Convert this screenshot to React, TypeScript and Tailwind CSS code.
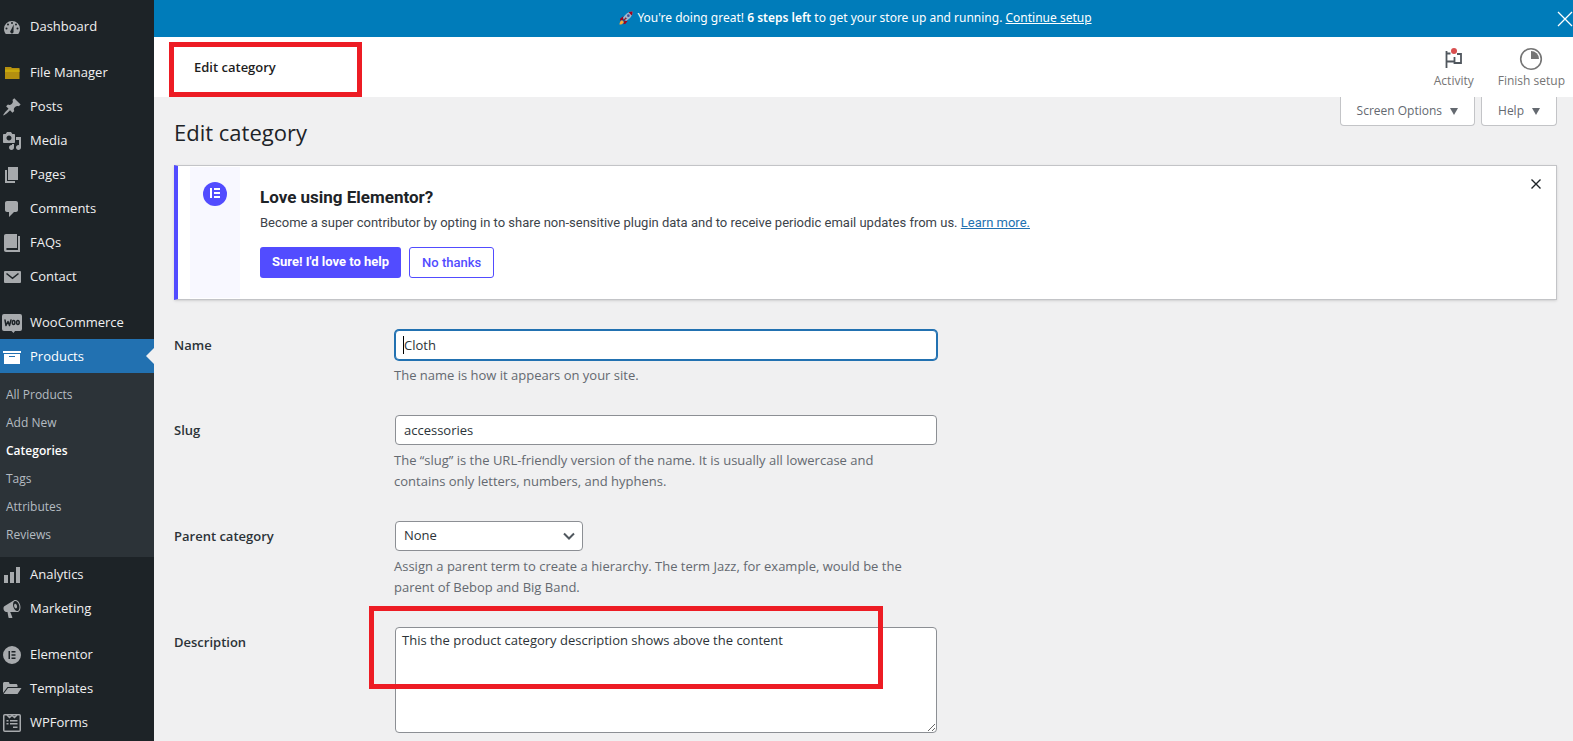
import type { ReactNode } from "react";
import clsx from "clsx";

function Dashicon({ children }: { children: ReactNode }) {
  return (
    <svg viewBox="0 0 20 20" className="h-5 w-5 shrink-0" fill="currentColor" fillRule="evenodd" aria-hidden="true">
      {children}
    </svg>
  );
}

const icons = {
  dashboard: (
    <path d="M3.8 17h12.4c1.1-1.4 1.8-3.1 1.8-5a8 8 0 1 0-16 0c0 1.900.700 3.600 1.800 5zM10 5a1 1 0 1 1 0 2 1 1 0 0 1 0-2zM6 6.600a1 1 0 1 1 0 2 1 1 0 0 1 0-2zM14 6.600a1 1 0 1 1 0 2 1 1 0 0 1 0-2zM4.500 10.500a1 1 0 1 1 0 2 1 1 0 0 1 0-2zM15.500 10.500a1 1 0 1 1 0 2 1 1 0 0 1 0-2zM11.700 7.500l-.2 6.500a1.700 1.700 0 1 1-2.600-.7z" />
  ),
  folder: (
    <>
      <path fill="#b48f10" d="M3 4h6l1 1h7.500v11H3z" />
      <path fill="#c9a80d" d="M3 6.500h14.500V9H3z" />
    </>
  ),
  pin: (
    <path d="M10.440 3.020l1.820-1.820 6.360 6.350-1.830 1.820c-1.050-.68-2.480-.57-3.410.36l-.75.75c-.92.93-1.040 2.350-.35 3.410l-1.830 1.820-2.410-2.410-2.800 2.790c-.42.42-3.380 2.710-3.800 2.290s1.860-3.390 2.280-3.810l2.790-2.790L4.100 9.360l1.830-1.820c1.050.69 2.480.57 3.400-.36l.75-.75c.93-.92 1.050-2.350.36-3.410z" />
  ),
  media: (
    <path d="M13 11V4c0-.55-.45-1-1-1h-1.670L9 1H5L3.670 3H2c-.55 0-1 .45-1 1v7c0 .55.45 1 1 1h10c.55 0 1-.45 1-1zM7 4.500c1.380 0 2.500 1.120 2.500 2.500S8.380 9.500 7 9.500 4.500 8.380 4.500 7 5.620 4.500 7 4.500zM14 6h5v10.500c0 1.380-1.120 2.500-2.500 2.500S14 17.880 14 16.500s1.120-2.500 2.500-2.500c.17 0 .34.02.5.05V9h-3V6zm-4 8.050V13h2v3.500c0 1.380-1.120 2.500-2.500 2.500S7 17.880 7 16.500 8.120 14 9.500 14c.17 0 .34.02.5.05z" />
  ),
  pages: <path d="M6 15V2h10v13H6zm-1 1h8v2H3V5h2v11z" />,
  comments: (
    <path d="M5 2h9c1.100 0 2 .9 2 2v7c0 1.100-.9 2-2 2h-2l-5 5v-5H5c-1.100 0-2-.9-2-2V4c0-1.100.9-2 2-2z" />
  ),
  book: <path d="M4 1h11v14H5c-1 0-1 2 0 2h11V3h2v16H4c-1.300 0-2-.9-2-2V3c0-1.200.8-2 2-2z" />,
  mail: (
    <>
      <rect x="2" y="4" width="17" height="12" rx="1" />
      <path d="M4.500 6.500l6 4.800 6-4.800" fill="none" stroke="#1d2327" strokeWidth="1.600" />
    </>
  ),
  woo: (
    <>
      <path d="M2 1h16a2 2 0 0 1 2 2v13a2 2 0 0 1-2 2h-5l-1.500 2-2-2H2a2 2 0 0 1-2-2V3a2 2 0 0 1 2-2z" />
      <g fill="none" stroke="#1d2327" strokeWidth="1.500" strokeLinecap="round" strokeLinejoin="round">
        <path d="M3 7l1 5.500L6 8.500l1.500 4L9 7" />
        <ellipse cx="11.600" cy="9.600" rx="1.300" ry="2" />
        <ellipse cx="15.900" cy="9.600" rx="1.300" ry="2" />
      </g>
    </>
  ),
  archive: <path d="M19 4v2H1V4h18zM2 7h16v10H2V7zm11 3V9H7v1h6z" />,
  chart: <path d="M18 18V2h-4v16h4zm-6 0V7H8v11h4zm-6 0v-8H2v8h4z" />,
  megaphone: (
    <path d="M18.150 5.940c.46 1.620.38 3.220-.02 4.480-.42 1.280-1.260 2.180-2.300 2.480-.16.06-.26.06-.4.06-.06.02-.12.02-.18.02-.06.02-.14.02-.22.02h-6.800l2.220 5.500c.02.14-.06.26-.14.34-.08.1-.24.16-.34.16H6.950c-.1 0-.26-.06-.34-.16-.08-.08-.16-.2-.14-.34l-1-5.500H4.250l-.02-.02c-.5.06-1.080-.18-1.540-.62s-.88-1.080-1.060-1.880c-.24-.8-.2-1.560-.02-2.200.18-.62.58-1.080 1.060-1.300l.02-.02 9-5.400c.1-.06.18-.1.24-.16.06-.04.14-.08.24-.12.16-.08.28-.12.5-.18 1.040-.3 2.240.1 3.220.98s1.840 2.240 2.260 3.860zm-2.580 5.980h-.02c.4-.1.74-.34 1.040-.7.58-.7.86-1.760.86-3.040 0-.64-.1-1.300-.28-1.980-.34-1.360-1.020-2.500-1.780-3.240s-1.680-1.100-2.460-.88c-.82.22-1.400.96-1.700 2-.32 1.040-.28 2.360.06 3.720.38 1.360 1 2.500 1.800 3.240.78.74 1.620 1.100 2.480.88zm-2.540-7.080c.22-.04.42-.02.62.04.38.16.76.48 1.020 1s.42 1.200.42 1.780c0 .3-.04.56-.12.8-.18.48-.44.84-.86.94-.34.1-.8-.06-1.140-.4s-.64-.86-.78-1.500c-.18-.62-.12-1.240.02-1.720s.48-.84.82-.94z" />
  ),
  elementor: (
    <path d="M10 1a9 9 0 1 0 0 18 9 9 0 0 0 0-18zM6.500 6v8H8V6zM9.500 6v1.500h4V6zM9.500 9.250v1.500h4v-1.500zM9.500 12.500V14h4v-1.500z" />
  ),
  templates: (
    <path d="M1 4.500c0-.8.7-1.500 1.500-1.500H6c.8 0 1.500.7 1.500 1.500V5H14c.8 0 1.500.7 1.500 1.500V8H5.500L1 14zM6 9h13.500l-4 6H1.500z" />
  ),
  wpforms: (
    <>
      <g fill="none" stroke="currentColor" strokeWidth="1.500">
        <rect x="1.750" y="1.750" width="16.500" height="16.500" rx="1" />
        <path d="M5 2l2.500 2.500L10 2.500l2.500 2L15 2" />
      </g>
      <path d="M4.500 7h2v1.500h-2zM8 7h7.500v1.500H8zM4.500 10h2v1.500h-2zM8 10h7.500v1.500H8zM11 13.500h4.500V15H11z" />
    </>
  ),
};

type MenuItem = { label: string; icon: keyof typeof icons; current?: boolean; submenu?: string[] };

// each group is divided from the next by a separator
const menuGroups: MenuItem[][] = [
  [{ label: "Dashboard", icon: "dashboard" }],
  [
    { label: "File Manager", icon: "folder" },
    { label: "Posts", icon: "pin" },
    { label: "Media", icon: "media" },
    { label: "Pages", icon: "pages" },
    { label: "Comments", icon: "comments" },
    { label: "FAQs", icon: "book" },
    { label: "Contact", icon: "mail" },
  ],
  [
    { label: "WooCommerce", icon: "woo" },
    {
      label: "Products",
      icon: "archive",
      current: true,
      submenu: ["All Products", "Add New", "Categories", "Tags", "Attributes", "Reviews"],
    },
    { label: "Analytics", icon: "chart" },
    { label: "Marketing", icon: "megaphone" },
  ],
  [
    { label: "Elementor", icon: "elementor" },
    { label: "Templates", icon: "templates" },
    { label: "WPForms", icon: "wpforms" },
  ],
];

function Sidebar() {
  return (
    <nav className="flex w-[154px] shrink-0 flex-col gap-3 bg-[#1d2327] pt-[9px]">
      {menuGroups.map((group, i) => (
        <ul key={i}>
          {group.map((item) => (
            <li key={item.label}>
              <a
                href="#"
                className={clsx(
                  "relative flex h-[34px] items-center gap-2 pt-0.5 pl-0.5 text-[13px]",
                  item.current ? "bg-[#2271b1] text-white" : "text-[#f0f0f1]",
                )}
              >
                <span className={item.current ? "text-white" : "text-[#a7aaad]"}>
                  <Dashicon>{icons[item.icon]}</Dashicon>
                </span>
                {item.label}
                {item.current && (
                  <span className="absolute top-1/2 right-0 -translate-y-1/2 border-8 border-l-0 border-transparent border-r-[#f0f0f1]" />
                )}
              </a>
              {item.submenu && (
                <ul className="bg-[#2c3338] py-2">
                  {item.submenu.map((sub) => (
                    <li key={sub}>
                      <a
                        href="#"
                        className={clsx(
                          "flex h-7 items-center pl-1.5 text-xs",
                          sub === "Categories" ? "font-semibold text-white" : "text-[#b5bcc2]",
                        )}
                      >
                        {sub}
                      </a>
                    </li>
                  ))}
                </ul>
              )}
            </li>
          ))}
        </ul>
      ))}
    </nav>
  );
}

function Rocket() {
  return (
    <svg viewBox="0 0 16 16" className="h-3.5 w-3.5" aria-hidden="true">
      <path d="M5 6L1.500 8.500 1 11l4-1zM10 11l-2.500 3.500L5 15l1-4z" fill="#a0041e" />
      <path d="M15.500.500C11 .3 7.500 3 4.500 8l3.500 3.500C13 8.500 15.700 5 15.500.500z" fill="#9fb6cc" />
      <path d="M15.500.500c-1.700 0-3 .2-4.500 1l3.500 3.500c.8-1.500 1-2.900 1-4.500z" fill="#a0041e" />
      <circle cx="10.700" cy="5.300" r="1.500" fill="#3b4f9b" />
      <path d="M7.500 7L3.500 12.500 9 8.500z" fill="#8b1a2b" />
      <path d="M3.500 10.500C1.500 11 .7 13 .5 15.500 3 15.300 5 14.500 5.500 12.500z" fill="#ffac33" />
    </svg>
  );
}

function SetupBar() {
  return (
    <div className="flex h-[37px] items-center bg-[#007cba] font-['Noto_Sans',sans-serif] text-xs text-white">
      <div className="flex flex-1 items-center justify-center gap-1 pb-0.5">
        <Rocket />
        <p>
          You're doing great! <strong className="font-semibold">6 steps left</strong> to get your store up and running.{" "}
          <a href="#" className="underline">
            Continue setup
          </a>
        </p>
      </div>
      <button type="button" aria-label="Dismiss">
        <svg viewBox="0 0 16 16" className="h-4 w-4" stroke="currentColor" strokeWidth="1.300">
          <path d="M1 1l14 14M15 1L1 15" />
        </svg>
      </button>
    </div>
  );
}

function Header() {
  return (
    <header className="flex h-[60px] items-center justify-between bg-white pr-2">
      <div className="relative flex items-center self-stretch pt-0.5 pl-10">
        <h2 className="text-[13px] font-semibold text-[#1e1e1e]">Edit category</h2>
        <div className="pointer-events-none absolute top-[5px] left-[15px] h-[55px] w-[193px] border-5 border-[#ed1c24]" />
      </div>
      <div className="flex gap-6 pt-0.5 text-xs text-[#757575]">
        <button type="button" className="flex flex-col items-center gap-0.5">
          <svg viewBox="0 0 24 24" className="h-6 w-6" fill="none" aria-hidden="true">
            <path d="M4.500 4v17M4.500 14.500h8V16h6.500V7h-4M4.500 6.500h4M12.500 10v4.500" stroke="#50575e" strokeWidth="1.800" />
            <circle cx="12" cy="4" r="3" fill="#d94f4f" />
          </svg>
          Activity
        </button>
        <button type="button" className="flex flex-col items-center gap-0.5">
          <svg viewBox="0 0 24 24" className="h-6 w-6" aria-hidden="true">
            <circle cx="12" cy="12" r="10.300" fill="none" stroke="#757575" strokeWidth="1.600" />
            <path d="M12 4a8 8 0 0 1 8 8h-8z" fill="#757575" />
          </svg>
          Finish setup
        </button>
      </div>
    </header>
  );
}

function ScreenMeta() {
  return (
    <div className="flex gap-1.5">
      {["Screen Options", "Help"].map((label) => (
        <button
          key={label}
          type="button"
          className="flex h-[29px] items-center gap-2 rounded-b border border-t-0 border-[#c3c4c7] bg-white px-4 text-xs text-[#646970]"
        >
          {label}
          <span className="border-x-4 border-t-7 border-transparent border-t-[#646970]" />
        </button>
      ))}
    </div>
  );
}

function ElementorMark() {
  return (
    <svg viewBox="0 0 12 12" className="h-3 w-3" fill="currentColor" aria-hidden="true">
      <path d="M1 1h2v10H1zM5 1h6v2H5zM5 5h6v2H5zM5 9h6v2H5z" />
    </svg>
  );
}

function ElementorNotice() {
  return (
    <section className="flex border border-l-4 border-[#c3c4c7] border-l-[#524cff] bg-white font-[Roboto,sans-serif] shadow-sm">
      <div className="my-px ml-3 flex w-[50px] justify-center bg-[#f8f8ff] pt-[15px]">
        <span className="flex h-6 w-6 items-center justify-center rounded-full bg-[#524cff] pb-0.5 text-white">
          <ElementorMark />
        </span>
      </div>
      <div className="flex-1 pt-[19px] pb-[21px] pl-5">
        <h3 className="text-[17px] leading-6 font-bold text-[#1d2327]">Love using Elementor?</h3>
        <p className="pt-1 text-[13px] leading-5 text-[#3c434a]">
          Become a super contributor by opting in to share non-sensitive plugin data and to receive periodic email
          updates from us.{" "}
          <a href="#" className="text-[#2271b1] underline">
            Learn more.
          </a>
        </p>
        <div className="flex gap-2 pt-3.5 text-[13px]">
          <button type="button" className="h-[31px] rounded-[3px] bg-[#524cff] px-3 pb-0.5 font-bold text-white">
            Sure! I'd love to help
          </button>
          <button
            type="button"
            className="h-[31px] rounded-[3px] border border-[#524cff] px-3 font-medium text-[#524cff]"
          >
            No thanks
          </button>
        </div>
      </div>
      <button type="button" aria-label="Dismiss notice" className="mt-3 mr-3.5 h-3 w-3 text-[#1d2327]">
        <svg viewBox="0 0 12 12" className="h-3 w-3" stroke="currentColor" strokeWidth="1.400">
          <path d="M1.500 1.500l9 9M10.500 1.500l-9 9" />
        </svg>
      </button>
    </section>
  );
}

function Field({ id, label, hint, children }: { id: string; label: string; hint?: string; children: ReactNode }) {
  return (
    <div className="flex">
      <label htmlFor={id} className="w-[220px] shrink-0 pt-[5px] text-[13px] leading-5 font-semibold text-[#2c3338]">
        {label}
      </label>
      <div className="w-full max-w-[544px]">
        <div className="relative flex px-px">{children}</div>
        {hint && <p className="max-w-[520px] pt-[5px] text-[13px] leading-[21px] text-[#646970]">{hint}</p>}
      </div>
    </div>
  );
}

const control = "rounded border border-[#8c8f94] bg-white text-[13px] text-[#2c3338] outline-none";

export default function App() {
  return (
    <div className="flex min-h-screen bg-[#f0f0f1] font-['Open_Sans','Noto_Sans',sans-serif]">
      <Sidebar />
      <div className="min-w-0 flex-1">
        <SetupBar />
        <Header />
        <main className="pr-4 pl-5">
          <div className="flex items-start justify-between pb-4">
            <h1 className="pt-[18px] text-[22px] leading-[34px] text-[#1d2327]">Edit category</h1>
            <ScreenMeta />
          </div>
          <ElementorNotice />
          <form className="flex flex-col gap-[29px] py-[30px]">
            <Field id="name" label="Name" hint="The name is how it appears on your site.">
              <input
                id="name"
                type="text"
                defaultValue="Cloth"
                className="h-[30px] w-full rounded border border-[#2271b1] bg-white px-2 text-[13px] text-[#2c3338] ring-1 ring-[#2271b1] outline-none"
              />
              <span className="pointer-events-none absolute top-1.5 left-[9px] h-[18px] w-px bg-black" />
            </Field>
            <Field
              id="slug"
              label="Slug"
              hint="The “slug” is the URL-friendly version of the name. It is usually all lowercase and contains only letters, numbers, and hyphens."
            >
              <input id="slug" type="text" defaultValue="accessories" className={clsx(control, "h-[30px] w-full px-2")} />
            </Field>
            <Field
              id="parent"
              label="Parent category"
              hint="Assign a parent term to create a hierarchy. The term Jazz, for example, would be the parent of Bebop and Big Band."
            >
              <div className="relative">
                <select id="parent" className={clsx(control, "h-[30px] w-[188px] appearance-none px-2")}>
                  <option>None</option>
                </select>
                <svg
                  viewBox="0 0 12 12"
                  className="pointer-events-none absolute top-[9px] right-2 h-3 w-3"
                  fill="none"
                  stroke="#50575e"
                  strokeWidth="2"
                >
                  <path d="M1 3.500l5 5 5-5" />
                </svg>
              </div>
            </Field>
            <Field id="description" label="Description">
              <textarea
                id="description"
                defaultValue="This the product category description shows above the content"
                className={clsx(control, "h-[106px] w-full px-1.5 py-0.5 leading-5")}
              />
              <div className="pointer-events-none absolute -top-[21px] -left-[25px] h-[83px] w-[514px] border-5 border-[#ed1c24]" />
            </Field>
          </form>
        </main>
      </div>
    </div>
  );
}
